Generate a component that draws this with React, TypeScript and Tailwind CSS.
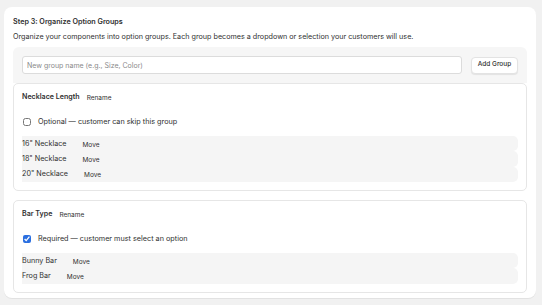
import { useState } from "react";

type Group = {
  name: string;
  required: boolean;
  items: string[];
};

const initialGroups: Group[] = [
  { name: "Necklace Length", required: false, items: ['16" Necklace', '18" Necklace', '20" Necklace'] },
  { name: "Bar Type", required: true, items: ["Bunny Bar", "Frog Bar"] },
];

function GroupCard({ group, onToggle }: { group: Group; onToggle: () => void }) {
  return (
    <div className="rounded-[5px] border border-[#e6e6e6] bg-white px-[8px] pt-[7px] pb-[8px]">
      <div className="flex items-end gap-[7px]">
        <span className="text-[7.1px] font-semibold leading-[12px] text-[#303030]">{group.name}</span>
        <button className="text-[6.5px] leading-[10px] text-[#303030]">Rename</button>
      </div>
      <label className="mt-[13px] flex items-center gap-[7px] pl-[1px] text-[7.25px] leading-[12px] text-[#303030]">
        <input
          type="checkbox"
          checked={group.required}
          onChange={onToggle}
          className="m-0 h-[8px] w-[8px] accent-[#2b6fe0]"
        />
        {group.required ? "Required — customer must select an option" : "Optional — customer can skip this group"}
      </label>
      <div className="mt-[8px] flex flex-col">
        {group.items.map((item) => (
          <div key={item} className="flex h-[15.33px] items-center rounded-r-[5px] bg-[#f5f5f5]">
            <span className="text-[7.2px] leading-[10px] text-[#303030]">{item}</span>
            <button className="ml-[16px] mt-[2px] text-[6.5px] leading-[10px] text-[#303030]">Move</button>
          </div>
        ))}
      </div>
    </div>
  );
}

export default function App() {
  const [name, setName] = useState("");
  const [groups, setGroups] = useState(initialGroups);

  const toggle = (i: number) =>
    setGroups((prev) => prev.map((g, j) => (j === i ? { ...g, required: !g.required } : g)));

  return (
    <div className="h-[305px] bg-[#f1f1f1] pl-[4px] pr-[6px] pt-[7px] font-['Inter',sans-serif]">
      <div className="rounded-[8px] bg-white px-[9px] pt-[10px] pb-[5px] shadow-[0_1px_0_rgba(0,0,0,0.06)]">
        <h2 className="text-[7.2px] font-semibold leading-[10px] text-[#303030]">Step 3: Organize Option Groups</h2>
        <p className="mt-[5px] text-[7.2px] leading-[10px] text-[#303030]">
          Organize your components into option groups. Each group becomes a dropdown or selection your customers will use.
        </p>
        <div className="mt-[5px] flex items-center gap-[9px] rounded-t-[6px] bg-[#f6f6f6] px-[9px] pt-[9px] pb-[9px]">
          <input
            value={name}
            onChange={(e) => setName(e.target.value)}
            placeholder="New group name (e.g., Size, Color)"
            className="h-[18px] flex-1 rounded-[3px] border border-[#dcdcdc] bg-white px-[4px] text-[7px] text-[#303030] outline-none placeholder:text-[#8a8a8a]"
          />
          <button className="h-[17px] w-[47px] rounded-[4px] border border-[#e3e3e3] bg-white text-[6.5px] font-medium text-[#303030] shadow-[0_1px_1px_rgba(0,0,0,0.08)]">
            Add Group
          </button>
        </div>
        <div className="flex flex-col gap-[9px]">
          {groups.map((g, i) => (
            <GroupCard key={g.name} group={g} onToggle={() => toggle(i)} />
          ))}
        </div>
      </div>
    </div>
  );
}
